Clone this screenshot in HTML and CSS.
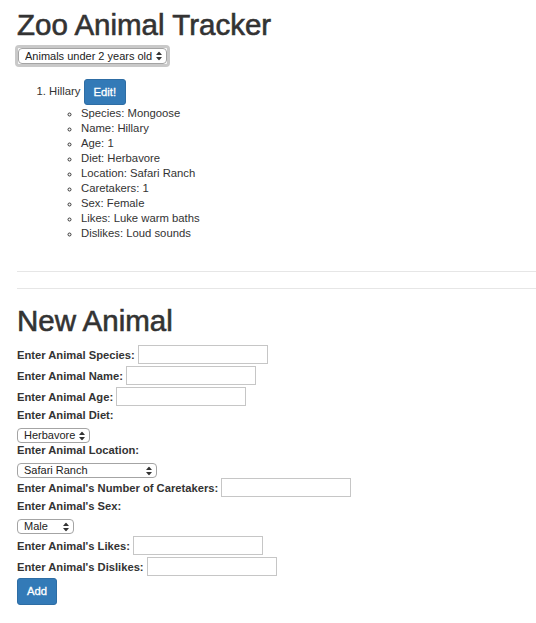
FILE: index.html
```html
<!DOCTYPE html>
<html lang="en">
<head>
<meta charset="utf-8">
<title>Zoo Animal Tracker</title>
<link rel="stylesheet" href="styles.css">
</head>
<body>
<div class="page">
  <h1 class="title">Zoo Animal Tracker</h1>
  <div class="filter">
    <span class="ring">
      <span class="select-wrap">
        <select class="sel sel-filter">
          <option>Animals under 2 years old</option>
          <option>All animals</option>
          <option>Animals 2 years and older</option>
        </select>
        <svg class="arrows" width="6" height="9" viewBox="0 0 6 9" aria-hidden="true"><polygon points="0,3.6 3,0 6,3.6"/><polygon points="0,5.4 3,9 6,5.4"/></svg>
      </span>
    </span>
  </div>

  <ol class="animals">
    <li>Hillary <button class="btn" type="button">Edit!</button>
      <ul class="details">
        <li>Species: Mongoose</li>
        <li>Name: Hillary</li>
        <li>Age: 1</li>
        <li>Diet: Herbavore</li>
        <li>Location: Safari Ranch</li>
        <li>Caretakers: 1</li>
        <li>Sex: Female</li>
        <li>Likes: Luke warm baths</li>
        <li>Dislikes: Loud sounds</li>
      </ul>
    </li>
  </ol>

  <hr class="rule rule-first">
  <hr class="rule rule-second">

  <h1 class="title title-new">New Animal</h1>
  <form class="animal-form">
    <div class="field"><label>Enter Animal Species:</label><input type="text" class="inp"></div>
    <div class="field"><label>Enter Animal Name:</label><input type="text" class="inp"></div>
    <div class="field"><label>Enter Animal Age:</label><input type="text" class="inp"></div>

    <label class="field-label">Enter Animal Diet:</label>
    <div class="select-row">
      <span class="select-wrap">
        <select class="sel sel-diet"><option>Herbavore</option><option>Carnivore</option><option>Omnivore</option></select>
        <svg class="arrows" width="6" height="9" viewBox="0 0 6 9" aria-hidden="true"><polygon points="0,3.6 3,0 6,3.6"/><polygon points="0,5.4 3,9 6,5.4"/></svg>
      </span>
    </div>

    <label class="field-label">Enter Animal Location:</label>
    <div class="select-row">
      <span class="select-wrap">
        <select class="sel sel-location"><option>Safari Ranch</option><option>Reptile House</option><option>Aviary</option></select>
        <svg class="arrows" width="6" height="9" viewBox="0 0 6 9" aria-hidden="true"><polygon points="0,3.6 3,0 6,3.6"/><polygon points="0,5.4 3,9 6,5.4"/></svg>
      </span>
    </div>

    <div class="field"><label>Enter Animal's Number of Caretakers:</label><input type="text" class="inp"></div>

    <label class="field-label">Enter Animal's Sex:</label>
    <div class="select-row select-row-spaced">
      <span class="select-wrap">
        <select class="sel sel-sex"><option>Male</option><option>Female</option></select>
        <svg class="arrows" width="6" height="9" viewBox="0 0 6 9" aria-hidden="true"><polygon points="0,3.6 3,0 6,3.6"/><polygon points="0,5.4 3,9 6,5.4"/></svg>
      </span>
    </div>

    <div class="field"><label>Enter Animal's Likes:</label><input type="text" class="inp"></div>
    <div class="field"><label>Enter Animal's Dislikes:</label><input type="text" class="inp"></div>

    <button class="btn btn-add" type="button">Add</button>
  </form>
</div>
</body>
</html>
```

FILE: styles.css
```css
html, body {
  margin: 0;
  padding: 0;
  background: #fff;
}

body {
  font-family: "Liberation Sans", Arial, Helvetica, sans-serif;
  font-size: 11.3px;
  line-height: 15px;
  color: #333;
}

.page {
  padding-left: 17px;
}

.title {
  margin: 9px 0 4px;
  font-size: 29.5px;
  line-height: 32px;
  font-weight: normal;
  color: #333;
  -webkit-text-stroke: 0.6px #333;
}

.title-new {
  margin: 16px 0 8px;
}

/* custom selects */
.filter {
  height: 22px;
  margin-left: -2px;
}

.ring {
  display: inline-block;
  border: 3px solid #c9c9c9;
  border-radius: 4px;
  box-sizing: border-box;
  width: 155px;
  height: 22px;
}

.select-wrap {
  position: relative;
  display: inline-block;
}

.sel {
  display: block;
  -webkit-appearance: none;
  appearance: none;
  box-sizing: border-box;
  height: 15px;
  margin: 0;
  padding: 0 10px 0 6px;
  border: 1px solid #a4a4a4;
  border-radius: 4px;
  background: #fff;
  font-family: inherit;
  font-size: 11px;
  line-height: 13px;
  color: #222;
}

.sel-filter {
  width: 149px;
  height: 16px;
}

.sel-diet { width: 73px; }
.sel-location { width: 140px; }
.sel-sex { width: 57px; }

.arrows {
  position: absolute;
  right: 5px;
  top: 50%;
  transform: translateY(-50%);
  fill: #333;
  pointer-events: none;
}

/* list of animals */
.animals {
  margin: 12px 0 0;
  padding-left: 32px;
}

.details {
  margin: 1px 0 0;
  padding-left: 32px;
  list-style-type: circle;
}

.btn {
  display: inline-block;
  vertical-align: middle;
  box-sizing: border-box;
  margin: 0;
  padding: 4.5px 9px;
  border: 1px solid #2e6da4;
  border-radius: 3px;
  background: #337ab7;
  color: #fff;
  font-family: inherit;
  font-size: 11.3px;
  line-height: 15px;
  -webkit-text-stroke: 0.3px #fff;
  cursor: pointer;
}

.btn-add {
  display: block;
  margin-top: 0;
  padding: 5px 9px;
}

/* rules */
.rule {
  border: 0;
  border-top: 1px solid #e6e6e6;
  height: 0;
  margin: 0;
}

.rule-first {
  margin-top: 30px;
}

.rule-second {
  margin-top: 16px;
}

/* form */
.animal-form {
  margin: 0;
}

.field {
  display: flex;
  align-items: baseline;
  gap: 3px;
  margin-bottom: 2px;
}

.field label,
.field-label {
  font-weight: bold;
  font-size: 11.2px;
}

.field-label {
  display: block;
  margin: 0 0 5px;
}

.inp {
  box-sizing: border-box;
  width: 130px;
  height: 19px;
  margin: 0;
  padding: 1px 2px;
  border: 1px solid #c6c6c6;
  border-radius: 0;
  background: #fff;
  font-family: inherit;
  font-size: 11.3px;
  line-height: 15px;
}

.select-row {
  display: flex;
  margin-bottom: 0;
}

.select-row-spaced {
  margin-bottom: 2px;
}
```
